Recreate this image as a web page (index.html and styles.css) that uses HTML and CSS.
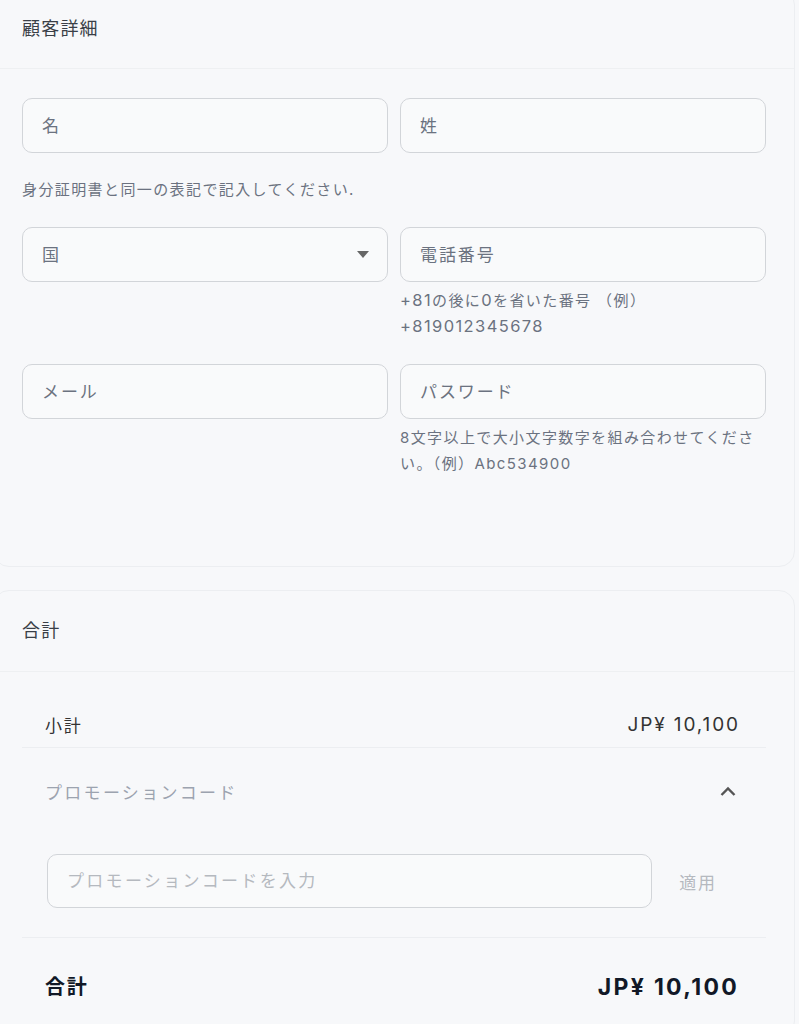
FILE: index.html
```html
<!DOCTYPE html>
<html lang="ja">
<head>
    <meta charset="UTF-8">
    <meta name="viewport" content="width=device-width, initial-scale=1.0">
    <title>お客様情報</title>
    <link rel="stylesheet" href="styles.css">
</head>
<body>
    <section class="card customer">
        <h2 class="card-title">顧客詳細</h2>
        <div class="card-body">
            <div class="form-grid">
                <div class="field">
                    <input class="field-input" type="text" placeholder="名">
                </div>
                <div class="field">
                    <input class="field-input" type="text" placeholder="姓">
                </div>

                <p class="note">身分証明書と同一の表記で記入してください.</p>

                <div class="field">
                    <div class="select-wrap">
                        <select class="field-input select">
                            <option value="">国</option>
                        </select>
                        <svg class="select-arrow" width="12" height="7" viewBox="0 0 12 7">
                            <polygon points="0,0 12,0 6,7" fill="#666"/>
                        </svg>
                    </div>
                </div>
                <div class="field">
                    <input class="field-input" type="tel" placeholder="電話番号">
                    <p class="hint"><span class="num">+81</span>の後に<span class="num">0</span>を省いた番号 （例） <span class="num">+819012345678</span></p>
                </div>

                <div class="field">
                    <input class="field-input" type="email" placeholder="メール">
                </div>
                <div class="field">
                    <input class="field-input" type="password" placeholder="パスワード">
                    <p class="hint">8文字以上で大小文字数字を組み合わせてください。（例）Abc534900</p>
                </div>
            </div>
        </div>
    </section>

    <section class="card summary">
        <h2 class="card-title">合計</h2>
        <div class="card-body summary-body">
            <div class="row subtotal">
                <span>小計</span>
                <span class="price">JP¥ 10,100</span>
            </div>
            <div class="promo">
                <div class="promo-toggle">
                    <span>プロモーションコード</span>
                    <svg width="16" height="11" viewBox="0 0 16 11">
                        <polyline points="1.5,9 8,2.5 14.5,9" fill="none" stroke="#555" stroke-width="2.4"/>
                    </svg>
                </div>
                <div class="promo-form">
                    <input class="promo-input" type="text" placeholder="プロモーションコードを入力">
                    <button class="promo-apply" type="button">適用</button>
                </div>
            </div>
            <div class="row total">
                <span>合計</span>
                <span class="price">JP¥ 10,100</span>
            </div>
        </div>
    </section>
</body>
</html>
```

FILE: styles.css
```css
body {
    margin: 0;
    font-family: Inter, "Noto Sans CJK JP", sans-serif;
    background: #f7f8fa;
    color: #374151;
}

.card {
    box-sizing: border-box;
    width: 802px;
    margin-left: -7px;
    background: #f7f8fa;
    border: 1px solid #eceef1;
    border-radius: 16px;
}

.customer {
    margin-top: -11px;
}

.summary {
    margin-top: 23px;
}

.card-title {
    margin: 0;
    padding: 28px 28px;
    font-size: 18px;
    font-weight: normal;
    line-height: 22px;
    letter-spacing: 1.2px;
    color: #3a3f47;
    border-bottom: 1px solid #eef0f2;
}

.summary .card-title {
    padding: 29px 28px;
}

.card-body {
    padding: 29px 28px 89px;
}

.form-grid {
    display: grid;
    grid-template-columns: 1fr 1fr;
    column-gap: 12px;
    row-gap: 24px;
}

.field {
    display: flex;
    flex-direction: column;
}

.field-input {
    box-sizing: border-box;
    width: 100%;
    height: 55px;
    padding: 0 19px;
    border: 1px solid #d2d5d9;
    border-radius: 10px;
    background: #f9fafb;
    font: inherit;
    font-size: 17px;
    letter-spacing: 1.9px;
    color: #6b7280;
}

.field-input::placeholder {
    color: #6b7280;
}

.select-wrap {
    position: relative;
}

.select {
    appearance: none;
    -webkit-appearance: none;
}

.select-arrow {
    position: absolute;
    right: 19px;
    top: 24px;
}

.note {
    grid-column: 1 / span 2;
    margin: 0;
    font-size: 15px;
    line-height: 26px;
    letter-spacing: 1.4px;
    color: #6b7280;
}

.hint {
    margin: 6px 0 0;
    font-size: 15px;
    line-height: 26px;
    letter-spacing: 1.4px;
    color: #6b7280;
}

.hint .num {
    font-size: 16.5px;
    line-height: 1;
}

.summary-body {
    padding: 29px 28px 0;
}

.row {
    display: flex;
    justify-content: space-between;
    align-items: center;
}

.subtotal {
    height: 46px;
    padding: 0 26px 0 23px;
    font-size: 17px;
    letter-spacing: 1.7px;
    color: #333;
    border-bottom: 1px solid #eceef1;
}

.subtotal .price {
    font-size: 19px;
    letter-spacing: 1.9px;
}

.promo {
    border-bottom: 1px solid #eceef1;
}

.promo-toggle {
    display: flex;
    justify-content: space-between;
    align-items: center;
    height: 86px;
    padding: 0 30px 0 23px;
    font-size: 17px;
    letter-spacing: 2.3px;
    color: #9ca3af;
}

.promo-form {
    display: flex;
    align-items: center;
    padding: 20px 22px 29px 25px;
}

.promo-input {
    flex: 1;
    box-sizing: border-box;
    height: 54px;
    padding: 0 19px;
    border: 1px solid #d2d5d9;
    border-radius: 10px;
    background: #f9fafb;
    font: inherit;
    font-size: 17px;
    letter-spacing: 2.3px;
}

.promo-input::placeholder {
    color: #b5b9bf;
}

.promo-apply {
    width: 92px;
    padding: 0;
    border: none;
    background: none;
    font: inherit;
    font-size: 17px;
    letter-spacing: 1.7px;
    color: #b5b9bf;
    cursor: pointer;
}

.total {
    padding: 37px 27px 37px 23px;
    font-size: 20px;
    font-weight: bold;
    line-height: 24px;
    letter-spacing: 1.8px;
    color: #111827;
}

.total .price {
    font-size: 23px;
    letter-spacing: 2.3px;
}
```
